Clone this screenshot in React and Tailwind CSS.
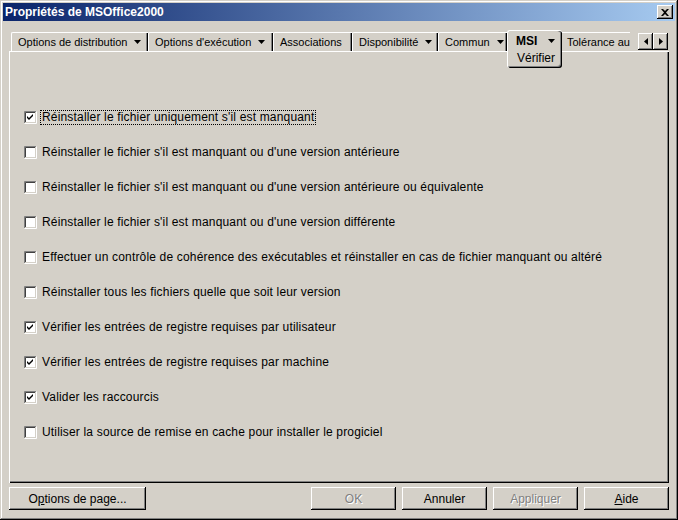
import React from 'react';

const font = { fontFamily: '"Liberation Sans", Arial, sans-serif' };

const raised =
  'shadow-[inset_-1px_-1px_#000,inset_1px_1px_#fff,inset_-2px_-2px_#808080,inset_2px_2px_#d4d0c8]';

const Arrow = () => (
  <svg width="7" height="4" viewBox="0 0 7 4" className="shrink-0">
    <polygon points="0,0 7,0 3.5,4" fill="#000" />
  </svg>
);

const CheckBox = ({ checked }) => (
  <svg width="13" height="13" viewBox="0 0 13 13" className="shrink-0">
    <rect x="2" y="2" width="9" height="9" fill="#fff" />
    <path d="M0.5 12V0.5H12" stroke="#808080" fill="none" />
    <path d="M1.5 11V1.5H11" stroke="#404040" fill="none" />
    <path d="M0.5 12.5H12.5V0.5" stroke="#fff" fill="none" />
    <path d="M1.5 11.5H11.5V1.5" stroke="#d4d0c8" fill="none" />
    {checked && <path d="M3 5v2l2 2 4-4V3L5 7z" fill="#000" />}
  </svg>
);

const tabs = [
  { label: 'Options de distribution', w: 'w-[137px]', arrow: true },
  { label: "Options d'exécution", w: 'w-[125px]', arrow: true },
  { label: 'Associations', w: 'w-[79px]', arrow: false },
  { label: 'Disponibilité', w: 'w-[86px]', arrow: true },
  { label: 'Commun', w: 'w-[69px]', arrow: true },
];

const options = [
  { label: "Réinstaller le fichier uniquement s'il est manquant", checked: true, focus: true },
  { label: "Réinstaller le fichier s'il est manquant ou d'une version antérieure" },
  { label: "Réinstaller le fichier s'il est manquant ou d'une version antérieure ou équivalente" },
  { label: "Réinstaller le fichier s'il est manquant ou d'une version différente" },
  { label: 'Effectuer un contrôle de cohérence des exécutables et réinstaller en cas de fichier manquant ou altéré' },
  { label: 'Réinstaller tous les fichiers quelle que soit leur version' },
  { label: 'Vérifier les entrées de registre requises par utilisateur', checked: true },
  { label: 'Vérifier les entrées de registre requises par machine', checked: true },
  { label: 'Valider les raccourcis', checked: true },
  { label: 'Utiliser la source de remise en cache pour installer le progiciel' },
];

const Button = ({ children, w, disabled }) => (
  <button
    type="button"
    className={`${w} h-[23px] bg-[#d4d0c8] text-[12px] ${raised} ${
      disabled ? 'text-[#808080] [text-shadow:1px_1px_0_#fff]' : 'text-black'
    }`}
  >
    {children}
  </button>
);

export default function App() {
  return (
    <div
      style={font}
      className="w-[678px] h-[520px] bg-[#d4d0c8] p-[3px] flex flex-col text-black shadow-[inset_-1px_-1px_#000,inset_1px_1px_#d4d0c8,inset_-2px_-2px_#808080,inset_2px_2px_#fff]"
    >
      {/* title bar */}
      <div className="h-[18px] flex items-center justify-between pl-[2px] pr-[2px] bg-[linear-gradient(to_right,#0a246a,#a6caf0)]">
        <span className="text-white font-bold text-[12px] leading-none">Propriétés de MSOffice2000</span>
        <div className={`w-[16px] h-[14px] bg-[#d4d0c8] flex items-center justify-center ${raised}`}>
          <svg width="8" height="7" viewBox="0 0 8 7">
            <path d="M0 0h2l2 2 2-2h2L5 3.5 8 7H6L4 5 2 7H0l3-3.5z" fill="#000" />
          </svg>
        </div>
      </div>

      <div className="flex flex-col px-[6px] mt-[9px]">
        {/* tab strip */}
        <div className="relative z-10 flex items-end h-[21px] pl-[2px]">
          {tabs.map((t) => (
            <div
              key={t.label}
              className={`${t.w} h-[19px] shrink-0 flex items-center gap-[7px] pl-[6px] text-[11px] border-t border-l border-white rounded-tl-[2px] shadow-[inset_-1px_0_#000,inset_-2px_0_#808080]`}
            >
              <span className="whitespace-nowrap">{t.label}</span>
              {t.arrow && <Arrow />}
            </div>
          ))}
          <div className="relative w-[55px] h-[21px] shrink-0 bg-[#d4d0c8] border-t border-l border-white rounded-tl-[3px] rounded-tr-[3px] shadow-[inset_-1px_0_#000,inset_-2px_0_#808080] flex items-center gap-[11px] pl-[8px]">
            <span className="font-bold text-[12px]">MSI</span>
            <Arrow />
            <div className="absolute left-[-1px] top-[20px] w-[55px] h-[17px] bg-[#d4d0c8] border-l border-white rounded-bl-[3px] rounded-br-[3px] shadow-[inset_-1px_-1px_#000,inset_-2px_-2px_#808080] text-[12px] pl-[9px] leading-[14px]">
              Vérifier
            </div>
          </div>
          <div className="w-[68px] h-[19px] shrink-0 flex items-center pl-[5px] text-[11px] border-t border-white whitespace-nowrap">
            Tolérance au
          </div>
          <div className="ml-[8px] mb-[1px] flex self-end h-[17px]">
            <div className={`w-[15px] h-[17px] flex items-center justify-center ${raised}`}>
              <svg width="4" height="7" viewBox="0 0 4 7">
                <polygon points="4,0 4,7 0,3.5" fill="#000" />
              </svg>
            </div>
            <div className={`w-[15px] h-[17px] flex items-center justify-center ${raised}`}>
              <svg width="4" height="7" viewBox="0 0 4 7">
                <polygon points="0,0 0,7 4,3.5" fill="#000" />
              </svg>
            </div>
          </div>
        </div>

        {/* panel */}
        <div className="h-[432px] border-t border-l border-white shadow-[inset_-1px_-1px_#000,inset_-2px_-2px_#808080] pl-[14px] pt-[58px] flex flex-col gap-[21px]">
          {options.map((o) => (
            <div key={o.label} className="flex items-center h-[14px] text-[12px] tracking-[0.17px]">
              <CheckBox checked={o.checked} />
              <span
                className={`ml-[3px] px-[1px] leading-[13px] whitespace-nowrap border border-dotted ${
                  o.focus ? 'border-black' : 'border-transparent'
                }`}
              >
                {o.label}
              </span>
            </div>
          ))}
        </div>

        {/* buttons */}
        <div className="flex mt-[4px] gap-[6px]">
          <Button w="w-[137px]">
            O<span className="underline">p</span>tions de page...
          </Button>
          <div className="flex-1" />
          <Button w="w-[85px]" disabled>
            OK
          </Button>
          <Button w="w-[85px]">Annuler</Button>
          <Button w="w-[85px]" disabled>
            Appliquer
          </Button>
          <Button w="w-[85px]">
            <span className="underline">A</span>ide
          </Button>
        </div>
      </div>
    </div>
  );
}
